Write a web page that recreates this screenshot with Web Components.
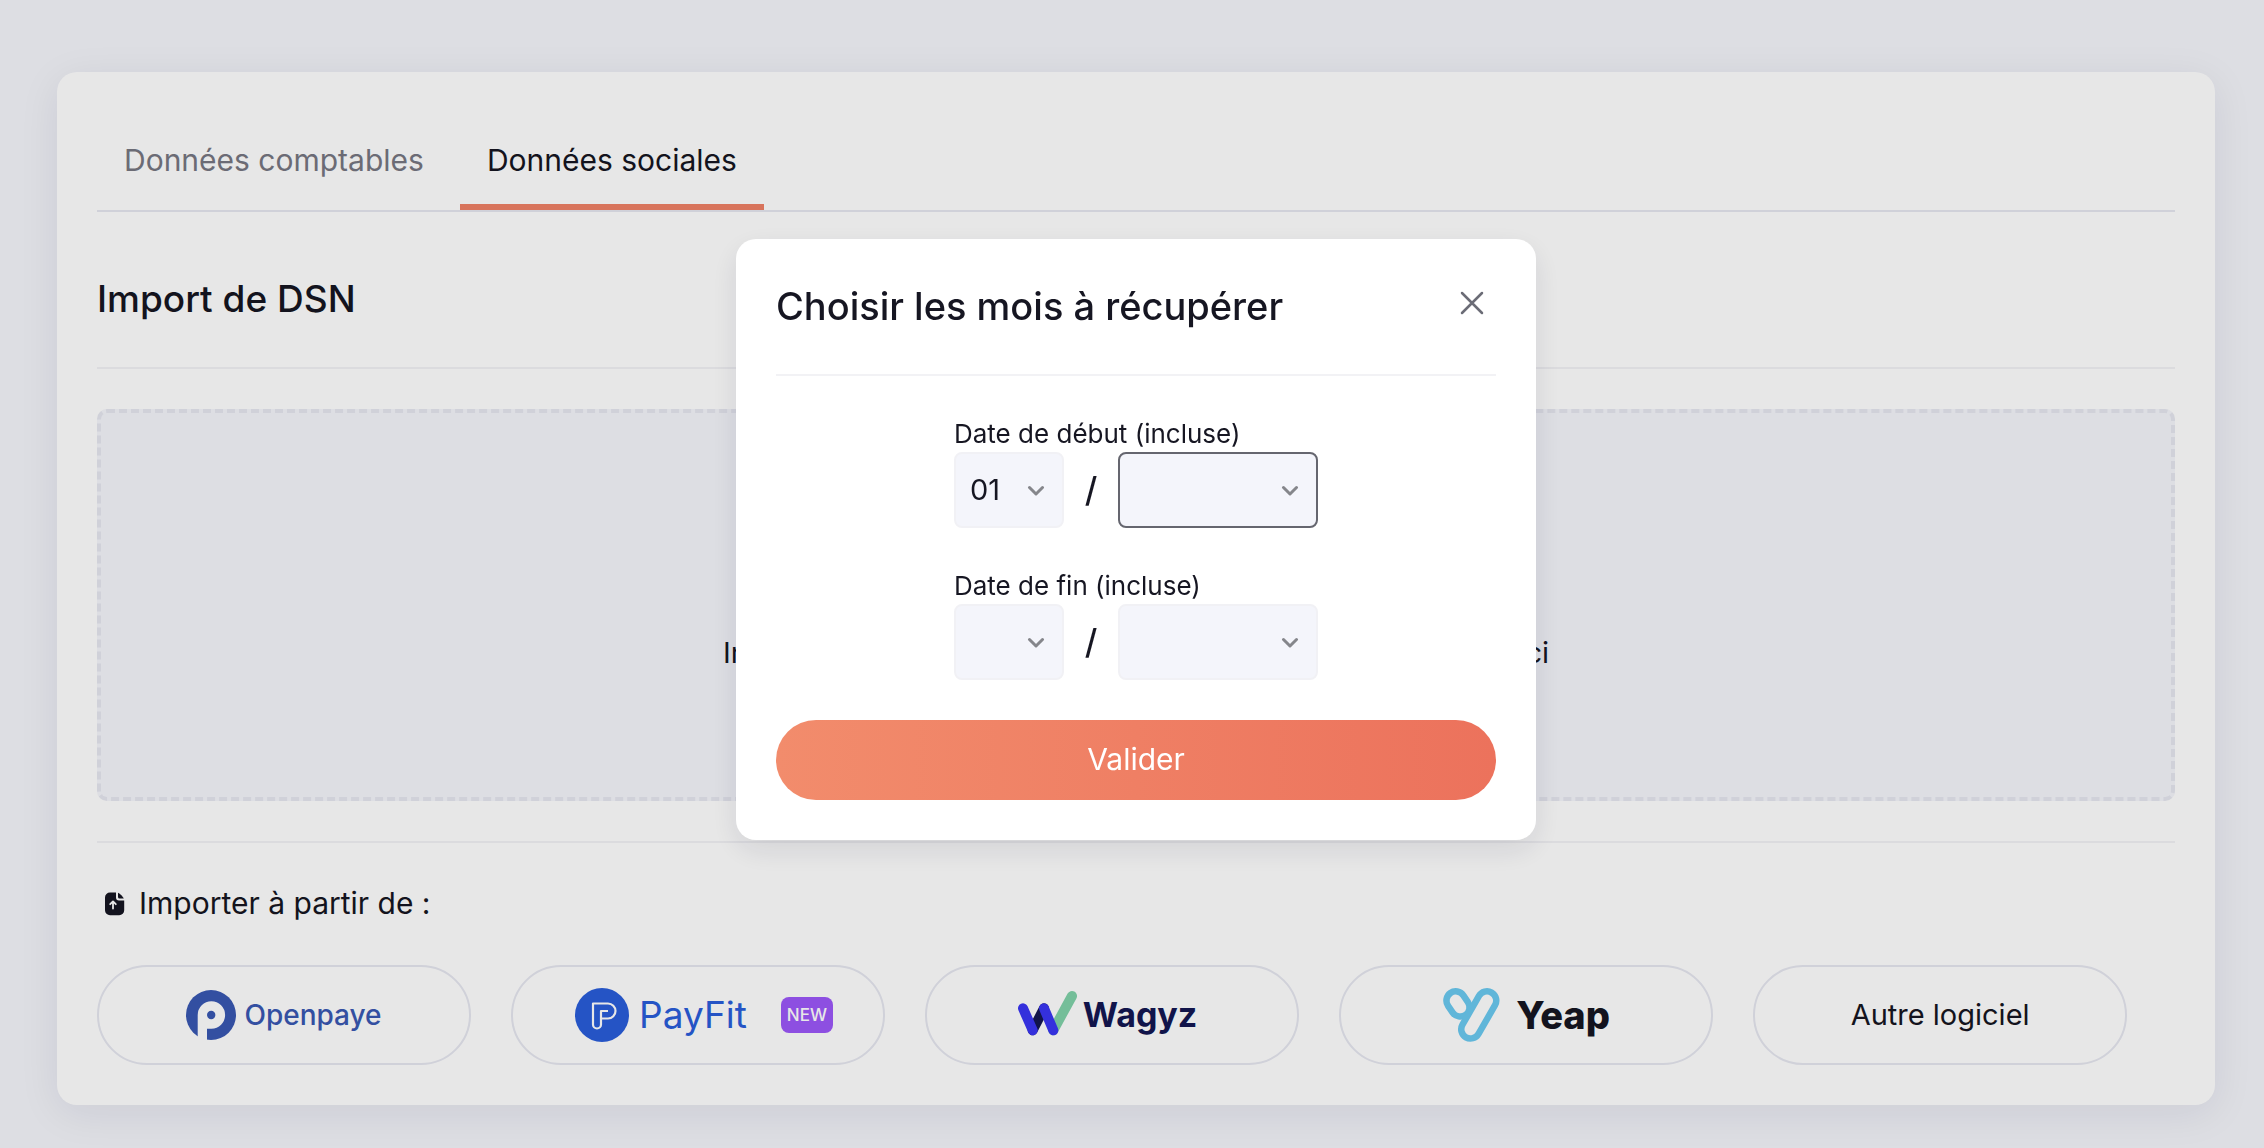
<!DOCTYPE html>
<html lang="fr">
<head>
<meta charset="utf-8">
<title>Import de DSN</title>
<style>
  :root {
    --ink: #161622;
    --muted: #777782;
    --page: #f4f5fb;
    --line: #e6e7f0;
    --line-soft: #f2f2f5;
    --accent: #ef8166;
    --fs-label: 26px;
    --fs-body: 29px;
    --fs-control: 30px;
    --fs-heading: 37px;
    --fs-title: 38px;
  }
  * { box-sizing: border-box; }
  body {
    margin: 0;
    min-height: 100vh;
    background: var(--page);
    color: var(--ink);
    font-family: Inter, "Open Sans", sans-serif;
    font-size: var(--fs-body);
    line-height: 44px;
  }
</style>
</head>
<body>
<import-page>
  <tab-bar slot="tabs">
    <tab-item>Données comptables</tab-item>
    <tab-item selected>Données sociales</tab-item>
  </tab-bar>
  <span slot="title">Import de DSN</span>
  <drop-zone><span>Importez</span><span>ici</span></drop-zone>
  <span slot="sources-title">Importer à partir de :</span>
  <software-button slot="source"><openpaye-logo></openpaye-logo></software-button>
  <software-button slot="source" badge="NEW"><payfit-logo></payfit-logo></software-button>
  <software-button slot="source"><wagyz-logo></wagyz-logo></software-button>
  <software-button slot="source"><yeap-logo></yeap-logo></software-button>
  <software-button slot="source">Autre logiciel</software-button>
</import-page>

<modal-dialog>
  <span slot="title">Choisir les mois à récupérer</span>
  <month-field label="Date de début (incluse)" month="01" active></month-field>
  <month-field label="Date de fin (incluse)"></month-field>
  <primary-button slot="action">Valider</primary-button>
</modal-dialog>

<script>
const define = (name, html, setup) => {
  const template = document.createElement('template');
  template.innerHTML = '<style>*{box-sizing:border-box}button,select{font:inherit;color:inherit}</style>' + html;
  customElements.define(name, class extends HTMLElement {
    constructor() {
      super();
      this.attachShadow({ mode: 'open' }).append(template.content.cloneNode(true));
    }
    connectedCallback() { if (setup) setup(this, this.shadowRoot); }
  });
};

define('import-page', `
  <style>
    :host { display: block; padding: 72px 49px 40px 57px; }
    main { background: #fff; border-radius: 20px; padding: 40px; box-shadow: 0 8px 40px rgba(20,20,50,.08); }
    h1, h2 { margin: 0; }
    h1 { font-size: var(--fs-heading); font-weight: 500; line-height: 56px; padding: 59px 0 40px; border-bottom: 2px solid var(--line-soft); }
    .drop { padding: 40px 0; border-bottom: 2px solid var(--line-soft); }
    h2 { display: flex; align-items: center; gap: 8px; font-size: var(--fs-control); font-weight: 400; padding: 38px 0 40px; }
    svg { width: 34px; height: 34px; }
    .sources { display: flex; gap: 40px; }
  </style>
  <main>
    <slot name="tabs"></slot>
    <h1><slot name="title"></slot></h1>
    <div class="drop"><slot></slot></div>
    <h2>
      <svg viewBox="0 0 34 34" aria-hidden="true">
        <path fill="#161622" d="M13 6.5H19V11.5a3 3 0 0 0 3 3H27.2V24.3a5 5 0 0 1-5 5H13a5 5 0 0 1-5-5V11.5a5 5 0 0 1 5-5Z"/>
        <path fill="#161622" d="M21 6.7C23 7.500 26 10.500 26.800 12.600H22.500A1.500 1.500 0 0 1 21 11.100Z"/>
        <path fill="none" stroke="#fff" stroke-width="1.800" stroke-linecap="round" stroke-linejoin="round" d="M16 22.500V16M13.200 18.200L16 15.400L18.800 18.200"/>
      </svg>
      <slot name="sources-title"></slot>
    </h2>
    <div class="sources"><slot name="source"></slot></div>
  </main>`);

define('tab-bar', `
  <style>:host { display: flex; gap: 9px; border-bottom: 2px solid var(--line); }</style>
  <slot></slot>`);

define('tab-item', `
  <style>
    :host { display: block; color: var(--muted); font-size: var(--fs-control); }
    :host([selected]) { color: var(--ink); }
    button { display: block; background: none; border: 0; border-bottom: 6px solid transparent; padding: 26px 27px 22px; }
    :host([selected]) button { border-bottom-color: var(--accent); }
  </style>
  <button type="button"><slot></slot></button>`);

define('drop-zone', `
  <style>
    :host { display: block; }
    button { display: flex; flex-direction: column; align-items: center; justify-content: center; gap: 24px;
      width: 100%; height: 392px; background: var(--page); border: 4px dashed var(--line); border-radius: 10px; }
    svg { width: 72px; height: 72px; }
    .hint { display: flex; justify-content: space-between; width: 826px; max-width: 100%; }
  </style>
  <button type="button">
    <svg viewBox="0 0 72 72" fill="none" stroke="#777782" stroke-width="4" stroke-linecap="round" stroke-linejoin="round" aria-hidden="true">
      <path d="M36 48V14M22 28L36 14L50 28M10 46V60H62V46"/>
    </svg>
    <span class="hint"><slot></slot></span>
  </button>`);

define('software-button', `
  <style>
    :host { display: block; width: 18%; }
    button { display: flex; align-items: center; justify-content: center; gap: 34px; width: 100%; height: 100px;
      padding: 0; background: none; border: 2px solid var(--line); border-radius: 50px; }
    :host([badge]) button { padding-left: 12px; }
    .badge { display: none; background: #9c58f9; color: #fff; border-radius: 8px; padding: 0 6px; font-size: 17px; font-weight: 500; line-height: 36px; }
    :host([badge]) .badge { display: block; }
  </style>
  <button type="button"><slot></slot><span class="badge"></span></button>`,
  (host, root) => { root.querySelector('.badge').textContent = host.getAttribute('badge') || ''; });

define('openpaye-logo', `
  <style>
    :host { display: flex; align-items: center; gap: 8px; color: #3958b2; font-size: 28px; font-weight: 500; }
    svg { width: 50px; height: 50px; }
  </style>
  <svg viewBox="0 0 50 50" aria-hidden="true">
    <circle cx="25" cy="25" r="25" fill="#3958b2"/>
    <path fill="#fff" d="M11.700 50V25A13.700 13.700 0 1 1 25.400 38.700H21V50Z"/>
    <circle cx="25.200" cy="25" r="4.200" fill="#3958b2"/>
  </svg>
  <span>Openpaye</span>`);

define('payfit-logo', `
  <style>
    :host { display: flex; align-items: center; gap: 10px; color: #295dda; font-size: 37px; }
    svg { width: 54px; height: 54px; }
  </style>
  <svg viewBox="0 0 54 54" aria-hidden="true">
    <circle cx="27" cy="27" r="27" fill="#295dda"/>
    <path fill="none" stroke="#fff" stroke-width="2.200" stroke-linejoin="round" d="M18 15.500H33A7.500 7.500 0 0 1 33 30.500H26V36.500A4 4 0 0 1 18 36.500ZM26 30.500V23H33"/>
  </svg>
  <span>PayFit</span>`);

define('wagyz-logo', `
  <style>
    :host { display: flex; align-items: center; gap: 6px; padding-right: 10px; color: #131752; font-size: 34px; font-weight: 700; }
    svg { width: 60px; height: 50px; }
  </style>
  <svg viewBox="0 0 60 50" fill="none" stroke-width="10" stroke-linecap="round" aria-hidden="true">
    <path stroke="#131752" d="M15.700 40.300L27 18.300"/>
    <path stroke="#81d2a9" d="M36.300 40.300L55 6"/>
    <path stroke="#3a35f3" d="M6 18.300L15.700 40.300M27 18.300L36.300 40.300"/>
  </svg>
  <span>Wagyz</span>`);

define('yeap-logo', `
  <style>
    :host { display: flex; align-items: center; gap: 16px; font-size: 38px; font-weight: 800; }
    svg { width: 58px; height: 56px; }
  </style>
  <svg viewBox="0 0 58 56" fill="none" stroke-linecap="round" aria-hidden="true">
    <path stroke="#6bc9f0" stroke-width="25" d="M13.700 13.600L18.300 20.300"/>
    <path stroke="#fff" stroke-width="12" d="M13.700 13.600L18.300 20.300"/>
    <path stroke="#6bc9f0" stroke-width="25" d="M45 13.600L28.500 42.300"/>
    <path stroke="#fff" stroke-width="12" d="M45 13.600L28.500 42.300"/>
  </svg>
  <span>Yeap</span>`);

define('modal-dialog', `
  <style>
    :host { position: fixed; inset: 0; display: flex; justify-content: center; align-items: flex-start;
      padding: 239px 0 0 8px; background: rgba(0,0,0,.095); }
    section { width: 800px; max-width: 100%; padding: 40px; background: #fff; border-radius: 20px; box-shadow: 0 10px 30px rgba(20,20,50,.1); }
    header { display: flex; justify-content: space-between; align-items: flex-start; padding-bottom: 40px; border-bottom: 2px solid var(--line-soft); }
    h2 { margin: 0; font-size: var(--fs-title); font-weight: 500; line-height: 55px; }
    .close { display: flex; padding: 12px; background: none; border: 0; }
    svg { width: 24px; height: 24px; }
    .fields { display: flex; flex-direction: column; align-items: center; gap: 40px; padding: 40px 0; }
  </style>
  <section role="dialog" aria-modal="true" aria-labelledby="title">
    <header>
      <h2 id="title"><slot name="title"></slot></h2>
      <button class="close" type="button" aria-label="Fermer">
        <svg viewBox="0 0 24 24" fill="none" stroke="#6b6c76" stroke-width="2.500" stroke-linecap="round" aria-hidden="true">
          <path d="M2 2L22 22M22 2L2 22"/>
        </svg>
      </button>
    </header>
    <div class="fields"><slot></slot></div>
    <slot name="action"></slot>
  </section>`);

define('month-field', `
  <style>
    :host { display: block; }
    label { display: block; font-size: var(--fs-label); line-height: 36px; }
    .row { display: flex; align-items: center; }
    .box { display: grid; align-items: center; justify-items: end; width: 110px; }
    .box.year { width: 200px; }
    .box > * { grid-area: 1 / 1; }
    select { appearance: none; width: 100%; height: 76px; padding: 0 40px 0 14px; background: var(--page); border: 2px solid #f1f1f5; border-radius: 8px; outline: 0; }
    :host([active]) .year select { border-color: #65666f; }
    svg { width: 18px; height: 12px; margin-right: 19px; pointer-events: none; }
    .sep { width: 54px; text-align: center; font-size: 34px; font-weight: 500; }
  </style>
  <label for="month"></label>
  <div class="row">
    <div class="box">
      <select id="month"><option value=""></option></select>
      <svg viewBox="0 0 18 12" fill="none" stroke="#85868b" stroke-width="3" stroke-linecap="round" stroke-linejoin="round" aria-hidden="true"><path d="M2.500 3.500L9 10L15.500 3.500"/></svg>
    </div>
    <span class="sep">/</span>
    <div class="box year">
      <select id="year" aria-label="Année"><option value=""></option></select>
      <svg viewBox="0 0 18 12" fill="none" stroke="#85868b" stroke-width="3" stroke-linecap="round" stroke-linejoin="round" aria-hidden="true"><path d="M2.500 3.500L9 10L15.500 3.500"/></svg>
    </div>
  </div>`,
  (host, root) => {
    root.querySelector('label').textContent = host.getAttribute('label');
    const month = host.getAttribute('month');
    if (month) root.querySelector('#month').add(new Option(month, month, true, true));
  });

define('primary-button', `
  <style>
    :host { display: block; font-size: var(--fs-control); color: #fff; }
    button { display: block; width: 100%; height: 80px; padding: 0 0 2px; border: 0; border-radius: 40px; background: linear-gradient(90deg, #f28c6c, #ec725c); }
  </style>
  <button type="button"><slot></slot></button>`);
</script>
</body>
</html>
